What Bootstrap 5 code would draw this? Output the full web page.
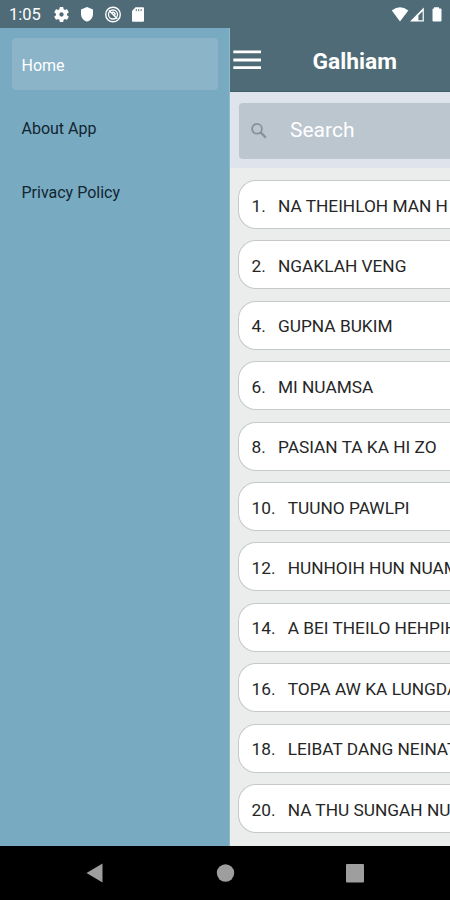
<!DOCTYPE html>
<html lang="en">
<head>
<meta charset="utf-8">
<meta name="viewport" content="width=device-width, initial-scale=1">
<title>Galhiam</title>
<link href="https://cdn.jsdelivr.net/npm/bootstrap@5.3.0/dist/css/bootstrap.min.css" rel="stylesheet">
<style>
body { font-family: Roboto, "Liberation Sans", sans-serif; width: 450px; height: 900px; line-height: 1.2; }
svg { display: block; flex: none; }
.status-bar { height: 28px; background: #4e6b77; padding: 1px 8px 0 9px; font-size: 16.5px; }
.status-bar span { padding-top: 1px; }
.status-icons { margin-left: 12px; gap: 9.5px; }
.app-main { height: 818px; }
.drawer { width: 230px; background: #78aac2; padding: 10px 11px 0 12px; border-right: 1px solid #8dbacd; font-size: 16px; }
.drawer .nav-link { height: 52px; margin-bottom: 11.5px; padding: 3px 0 0 9.5px; color: #122631; border-radius: 4px; }
.drawer .nav-link.active { background: #8bb4c9; color: #fff; }
.screen { background: #ebedec; }
.title-bar { height: 64px; background: #4e6b77; padding: 0 0 0 3px; border-bottom: 1px solid #3f5f6b; }
.title-bar h1 { font-size: 22.8px; font-weight: 700; margin: 5px 0 0 51.5px; }
.search-band { height: 76px; background: #dfe4ec; padding: 11px 0 9px 9px; }
.search-box { background: #bcc6cf; border-radius: 4px 0 0 4px; color: #fff; font-size: 21px; padding-left: 11px; gap: 22px; }
.songs { padding: 12px 0 0 8px; gap: 11.4px; }
.song { height: 49px; flex: none; background: #fff; border: 1px solid #c5c9ca; border-width: 1px 0 1.5px 1px; border-radius: 18px 0 0 18px; padding: 3px 0 0 12.5px; font-size: 17.3px; color: #262626; gap: 12.2px; }
.nav-keys { height: 54px; background: #000; }
</style>
<script src="https://cdn.jsdelivr.net/npm/bootstrap@5.3.0/dist/js/bootstrap.bundle.min.js"></script>
</head>
<body class="overflow-hidden d-flex flex-column">
<header class="status-bar d-flex align-items-center text-white flex-shrink-0">
  <span>1:05</span>
  <div class="status-icons d-flex align-items-center">
    <svg width="17" height="17" viewBox="1 1 22 22" fill="#fff"><path d="M19.14 12.94c.04-.3.06-.61.06-.94s-.02-.64-.07-.94l2.03-1.58a.49.49 0 0 0 .12-.61l-1.92-3.32a.49.49 0 0 0-.59-.22l-2.39.96a7 7 0 0 0-1.62-.94l-.36-2.54a.48.48 0 0 0-.48-.41h-3.84a.48.48 0 0 0-.47.41l-.36 2.54c-.59.24-1.13.57-1.62.94l-2.39-.96a.48.48 0 0 0-.59.22L2.74 8.87a.48.48 0 0 0 .12.61l2.03 1.58a6 6 0 0 0 0 1.88l-2.03 1.58a.49.49 0 0 0-.12.61l1.92 3.32c.12.22.37.29.59.22l2.39-.96c.5.38 1.03.7 1.62.94l.36 2.54c.05.24.24.41.48.41h3.84c.24 0 .44-.17.47-.41l.36-2.54a7 7 0 0 0 1.62-.94l2.39.96c.22.08.47 0 .59-.22l1.92-3.32a.49.49 0 0 0-.12-.61zM12 14.800a2.800 2.800 0 1 1 0-5.600 2.800 2.800 0 0 1 0 5.600z"/></svg>
    <svg width="16" height="17" viewBox="0 0 16 17" fill="#fff"><path d="M8 1 14 3.4v4.5c0 3.5-2.3 6.500-6 7.700-3.700-1.200-6-4.200-6-7.700V3.400z"/></svg>
    <svg width="17" height="17" viewBox="0.500 0 17 17" fill="none" stroke="#fff"><circle cx="8.500" cy="8.500" r="7.300" stroke-width="1.400"/><circle cx="8.500" cy="8.500" r="4.500" stroke-width="1.300"/><path d="m4.500 4.500 8.300 8.300M7.500 6.500a2.200 2.200 0 0 1 3 2.700" stroke-width="1.400"/></svg>
    <svg width="15" height="17" viewBox="1 0 15 17"><path d="M5.500 1.300H13q1 0 1 1v12.500q0 1-1 1H3q-1 0-1-1V5z" fill="#fff"/><path d="M6.300 3v2.200M8.700 3v2.200M11.100 3v2.200" stroke="#4e6b77" stroke-width=".9"/></svg>
  </div>
  <div class="d-flex align-items-center ms-auto">
    <svg width="50" height="17" viewBox="0 0 50 17"><path d="M-.2 4.500Q8 -1.800 16.300 4.500L8 15.500z" fill="#fff"/><path d="M31.800 1.500v14H18z" fill="#fff"/><path d="M30.600 5.200v9h-4.200V9.500z" fill="#4e6b77"/><path d="M42 1.200h5v1.300h1.500q1 0 1 1V14.500q0 1-1 1h-7q-1 0-1-1V3.500q0-1 1-1H42z" fill="#fff"/></svg>
  </div>
</header>
<main class="app-main d-flex flex-shrink-0">
  <nav class="drawer nav flex-column flex-nowrap flex-shrink-0">
    <a class="nav-link active d-flex align-items-center" href="#">Home</a>
    <a class="nav-link d-flex align-items-center" href="#">About App</a>
    <a class="nav-link d-flex align-items-center" href="#">Privacy Policy</a>
  </nav>
  <section class="screen flex-grow-1 overflow-hidden d-flex flex-column">
    <div class="title-bar d-flex align-items-center text-white flex-shrink-0">
      <svg width="28" height="20" viewBox="0 0 28 20"><path d="M.3 1.800H28M.3 10H28M.3 17.600H28" stroke="#fff" stroke-width="2.800"/></svg>
      <h1>Galhiam</h1>
    </div>
    <div class="search-band flex-shrink-0">
      <div class="search-box d-flex align-items-center h-100">
        <svg width="18" height="18" viewBox="0 0 18 18" fill="none" stroke="#86929a"><circle cx="7" cy="6.800" r="4.900" stroke-width="1.800"/><path d="m10.600 10.400 5.200 5.200" stroke-width="2.200"/></svg>
        <span>Search</span>
      </div>
    </div>
    <div class="songs d-flex flex-column text-nowrap">
      <div class="song d-flex align-items-center"><span>1.</span><span>NA THEIHLOH MAN H</span></div>
      <div class="song d-flex align-items-center"><span>2.</span><span>NGAKLAH VENG</span></div>
      <div class="song d-flex align-items-center"><span>4.</span><span>GUPNA BUKIM</span></div>
      <div class="song d-flex align-items-center"><span>6.</span><span>MI NUAMSA</span></div>
      <div class="song d-flex align-items-center"><span>8.</span><span>PASIAN TA KA HI ZO</span></div>
      <div class="song d-flex align-items-center"><span>10.</span><span>TUUNO PAWLPI</span></div>
      <div class="song d-flex align-items-center"><span>12.</span><span>HUNHOIH HUN NUAM</span></div>
      <div class="song d-flex align-items-center"><span>14.</span><span>A BEI THEILO HEHPIH</span></div>
      <div class="song d-flex align-items-center"><span>16.</span><span>TOPA AW KA LUNGDA</span></div>
      <div class="song d-flex align-items-center"><span>18.</span><span>LEIBAT DANG NEINAT</span></div>
      <div class="song d-flex align-items-center"><span>20.</span><span>NA THU SUNGAH NU</span></div>
    </div>
  </section>
</main>
<footer class="nav-keys flex-shrink-0 d-flex justify-content-center align-items-center">
  <svg width="450" height="54" viewBox="0 0 450 54" fill="#9e9e9e"><path d="M86.500 27 102.500 17.500v19z"/><circle cx="225.500" cy="27" r="8.700"/><rect x="346" y="18" width="18" height="18.500" rx="1"/></svg>
</footer>
</body>
</html>
